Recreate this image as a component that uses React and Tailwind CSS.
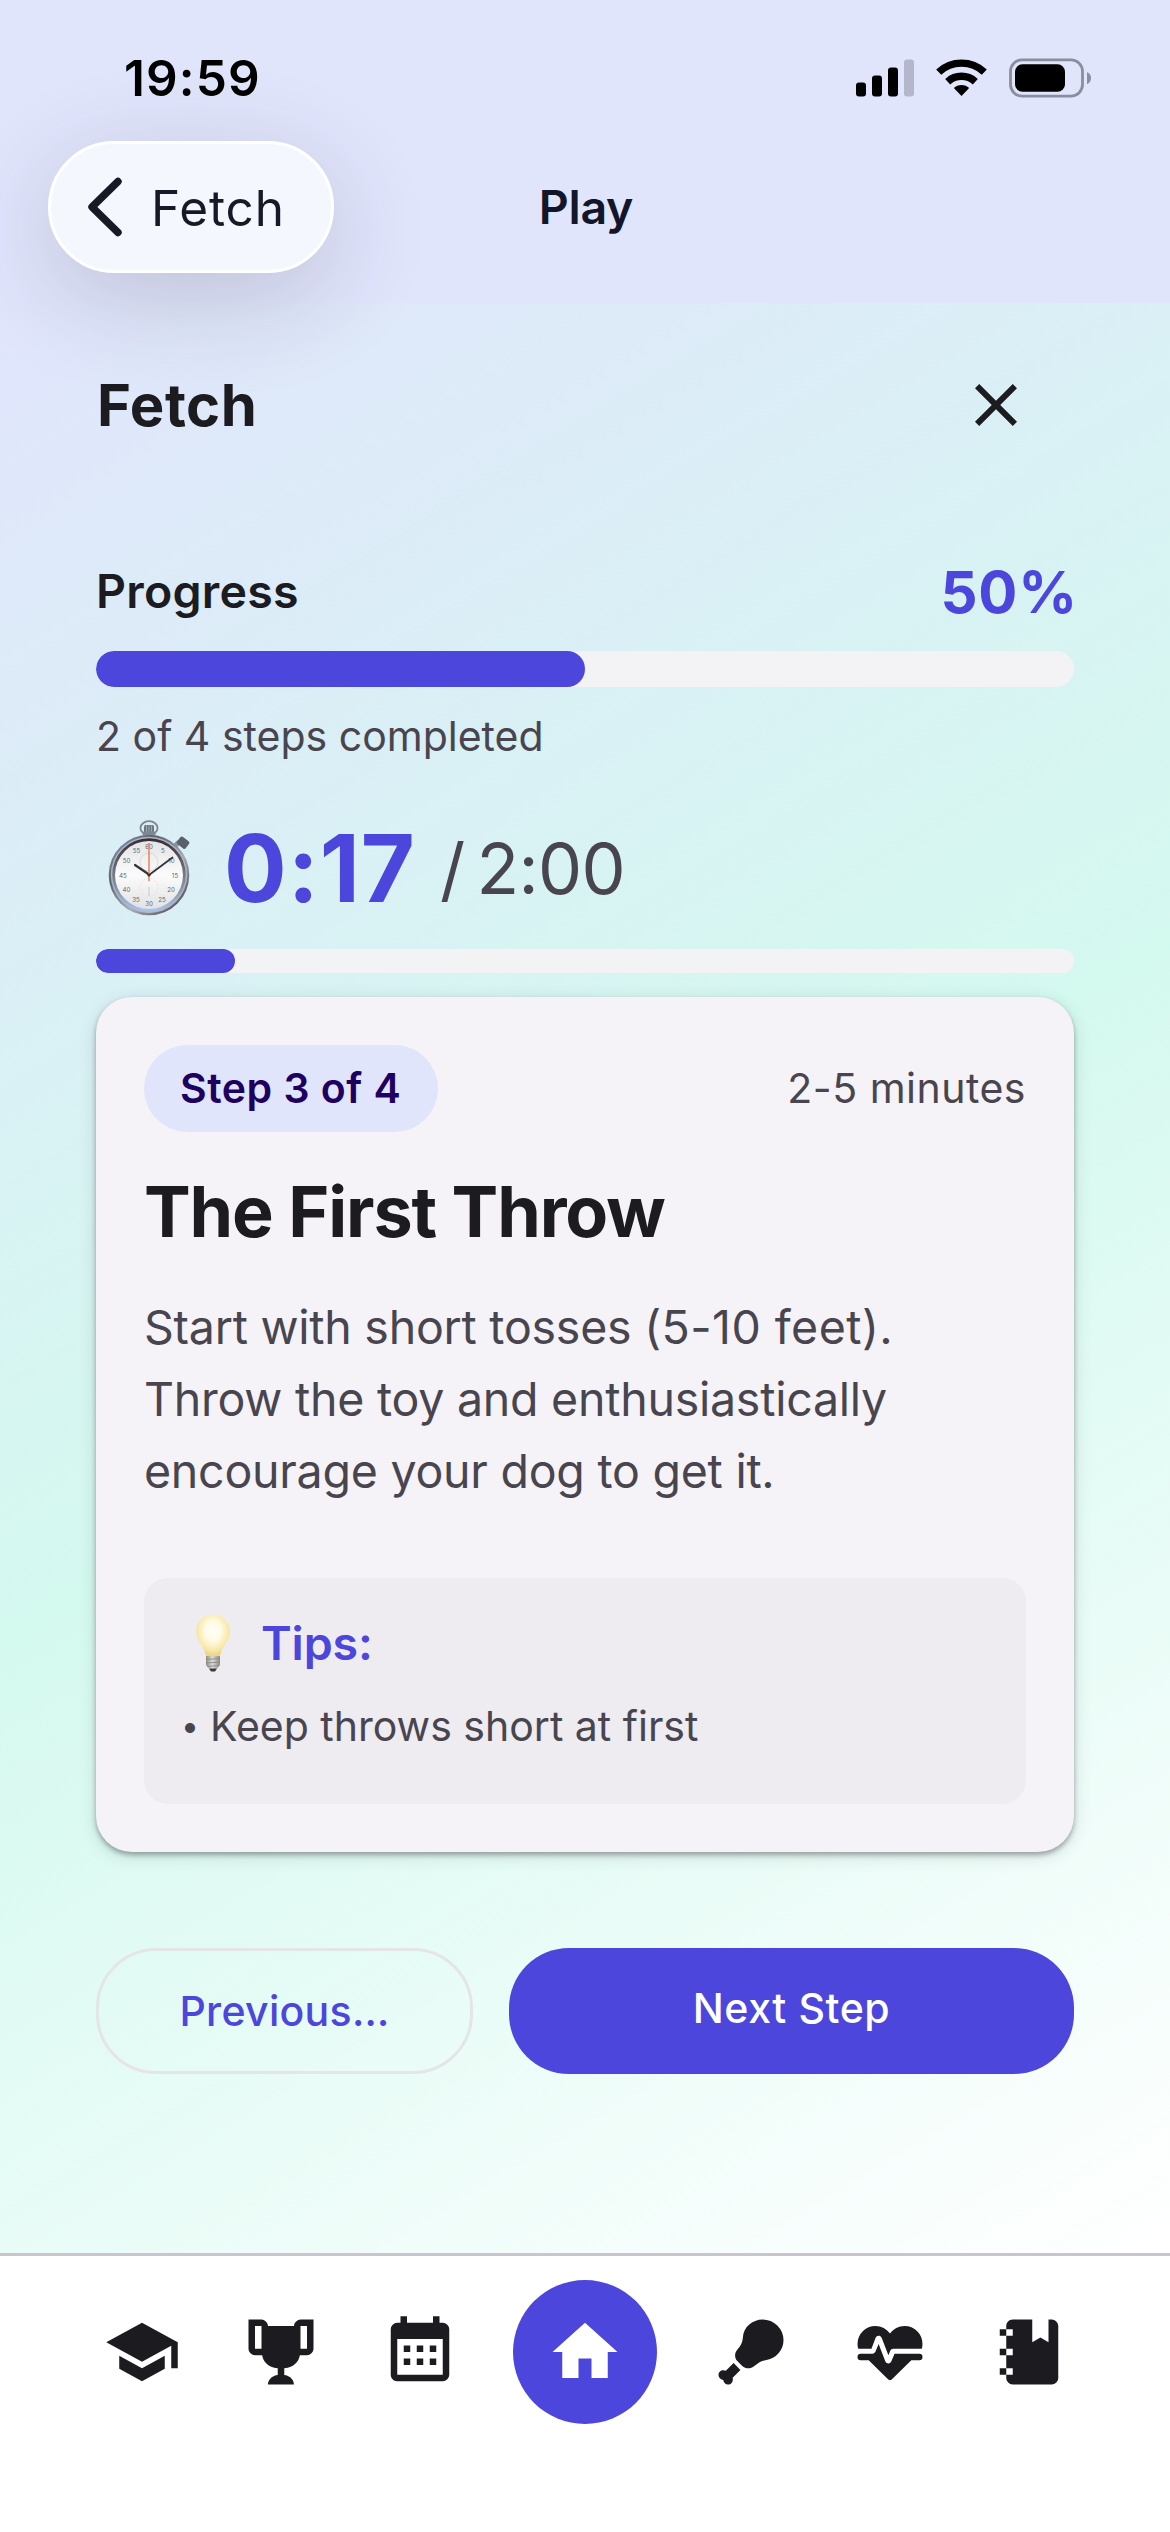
import clsx from 'clsx';

const steps = { current: 3, total: 4, completed: 2 };
const timer = { elapsed: 17, total: 120 };

const tabs = [
  { name: 'Training', path: 'M12,3L1,9L12,15L21,10.09V17H23V9M5,13.18V17.18L12,21L19,17.18V13.18L12,17L5,13.18Z' },
  { name: 'Achievements', path: 'M18 2C17.1 2 16 3 16 4H8C8 3 6.9 2 6 2H2V11C2 12 3 13 4 13H6.2C6.6 15 7.9 16.7 11 17V19.08C8 19.54 8 22 8 22H16C16 22 16 19.54 13 19.08V17C16.1 16.7 17.4 15 17.8 13H20C21 13 22 12 22 11V2H18M6 11H4V4H6V11M20 11H18V4H20V11Z' },
  { name: 'Calendar', path: 'M9,10V12H7V10H9M13,10V12H11V10H13M17,10V12H15V10H17M19,3A2,2 0 0,1 21,5V19A2,2 0 0,1 19,21H5C3.89,21 3,20.1 3,19V5A2,2 0 0,1 5,3H6V1H8V3H16V1H18V3H19M19,19V8H5V19H19M9,14V16H7V14H9M13,14V16H11V14H13M17,14V16H15V14H17Z' },
  { name: 'Home', active: true, path: 'M10,20V14H14V20H19V12H22L12,3L2,12H5V20H10Z' },
  { name: 'Food', path: 'M15.6,2A6.4,6.4 0 0,1 22,8.3A6.2,6.2 0 0,1 16.8,14.45C15.6,14.65 14.8,15 14.1,15.55L12.6,16.6C11.6,17.3 10.2,17.1 9.3,16.3L7.8,14.8C6.9,13.8 6.9,12.4 7.7,11.4L8.5,10.4C9.1,9.5 9.4,8.7 9.5,7.6C9.6,4.4 12.4,2 15.6,2M6.65,15.4L8.75,17.5L6.35,19.95C6.6,21 6,22 4.95,22C4.1,22 3.6,21.4 3.45,20.6C2.6,20.5 2,19.9 2,19.1C2,18 3.1,17.3 4.25,17.8L6.65,15.4Z' },
  { name: 'Health', path: 'M7.5,4A5.5,5.5 0 0,0 2,9.5C2,10 2.09,10.5 2.22,11H6.3L7.57,7.63C7.87,6.83 9.05,6.75 9.43,7.63L11.5,13L12.09,11.58C12.22,11.25 12.57,11 13,11H21.78C21.91,10.5 22,10 22,9.5A5.5,5.5 0 0,0 16.5,4C14.64,4 13,4.93 12,6.34C11,4.93 9.36,4 7.5,4V4M3,12.5A1,1 0 0,0 2,13.5A1,1 0 0,0 3,14.5H5.44L11,20C12,20.9 12,20.9 13,20L18.56,14.5H21A1,1 0 0,0 22,13.5A1,1 0 0,0 21,12.5H13.4L12.47,14.8C12.07,15.81 10.92,15.67 10.55,14.83L8.5,9.5L7.54,11.83C7.39,12.21 7.05,12.5 6.6,12.5H3Z' },
  { name: 'Journal', path: 'M3,7V5H5V4C5,2.89 5.9,2 7,2H13V9L15.5,7.5L18,9V2H19C20.05,2 21,2.95 21,4V20C21,21.05 20.05,22 19,22H7C5.95,22 5,21.05 5,20V19H3V17H5V13H3V11H5V7H3M7,11H5V13H7V11M7,7V5H5V7H7M7,19V17H5V19H7Z' },
];

const dialNumbers = [
  ['60', 41, 29], ['5', 55, 33], ['10', 63.5, 43], ['15', 67, 57.5], ['20', 63, 71.5], ['25', 54, 82],
  ['30', 41, 86], ['35', 28, 82], ['40', 18.5, 71.5], ['45', 15, 57.5], ['50', 18.5, 43], ['55', 28.5, 33],
];

function formatTime(seconds) {
  return `${Math.floor(seconds / 60)}:${String(seconds % 60).padStart(2, '0')}`;
}

function StatusIcons() {
  return (
    <svg className="w-[236px] h-10" viewBox="0 0 236 40" fill="none">
      <rect x="0" y="24.5" width="10" height="14" rx="3" fill="#000" />
      <rect x="16" y="17.5" width="10" height="21" rx="3" fill="#000" />
      <rect x="32" y="9.5" width="10" height="29" rx="3" fill="#000" />
      <rect x="48" y="1.5" width="10" height="37" rx="3" fill="#b4b7cb" />
      <path d="M82.7 14.1A33.4 33.4 0 0 1 128.3 14.1" stroke="#000" strokeWidth="7.4" />
      <path d="M91.7 23.7A20.3 20.3 0 0 1 119.3 23.7" stroke="#000" strokeWidth="7.4" />
      <path d="M105.5 38L98.3 30.6Q97.7 29.8 98.6 29.2A11.8 11.8 0 0 1 112.4 29.2Q113.3 29.8 112.7 30.6Z" fill="#000" />
      <rect x="154.5" y="1.9" width="72" height="36.2" rx="11.5" stroke="#8b8e9c" strokeWidth="2.8" />
      <rect x="159" y="6.3" width="50" height="27.4" rx="7.5" fill="#000" />
      <path d="M231 14C234 15.5 235 17.8 235 20C235 22.2 234 24.8 231 26.2Z" fill="#8b8e9c" />
    </svg>
  );
}

function Stopwatch() {
  return (
    <svg className="w-[84px] h-24 ml-3" viewBox="0 0 84 96">
      <defs>
        <linearGradient id="rim" x1="0" y1="0" x2="1" y2="1">
          <stop offset="0" stopColor="#8fa9cf" />
          <stop offset="0.3" stopColor="#5d6169" />
          <stop offset="0.6" stopColor="#a9acb3" />
          <stop offset="1" stopColor="#3c2c2f" />
        </linearGradient>
        <linearGradient id="rimInner" x1="0" y1="0" x2="0" y2="1">
          <stop offset="0" stopColor="#3a2a2e" />
          <stop offset="0.5" stopColor="#777a82" />
          <stop offset="1" stopColor="#a9c4ee" />
        </linearGradient>
        <linearGradient id="dial" x1="0" y1="0" x2="0" y2="1">
          <stop offset="0" stopColor="#e4e4e6" />
          <stop offset="0.5" stopColor="#fbfbfb" />
          <stop offset="1" stopColor="#e2e2e4" />
        </linearGradient>
      </defs>
      <ellipse cx="41" cy="8" rx="8.6" ry="6.8" fill="none" stroke="#7c8691" strokeWidth="1.8" />
      <rect x="36" y="5" width="10" height="8" rx="1.5" fill="#6d7681" />
      <path d="M38.5 5.5V12M41 5.5V12M43.5 5.5V12" stroke="#aeb7c0" strokeWidth="0.8" />
      <rect x="34.5" y="11.5" width="13" height="4" rx="1.5" fill="#7f8992" />
      <path d="M66 27L71 22" stroke="#8a939c" strokeWidth="5" />
      <rect x="70" y="18" width="11" height="9" rx="2" fill="#59626c" transform="rotate(38 75 22)" />
      <circle cx="41" cy="55" r="40.3" fill="url(#rim)" />
      <circle cx="41" cy="55" r="38.2" fill="#a9b7cd" />
      <circle cx="41" cy="55" r="36.8" fill="url(#rimInner)" />
      <circle cx="41" cy="55" r="34" fill="url(#dial)" />
      <circle cx="41" cy="42" r="9" fill="none" stroke="#d0d0d3" strokeWidth="0.7" />
      <circle cx="41" cy="67.5" r="9" fill="none" stroke="#dcdcdf" strokeWidth="0.7" strokeDasharray="2 2" />
      <path d="M41 67V76" stroke="#c4c4c7" strokeWidth="0.9" />
      {dialNumbers.map(([label, x, y]) => (
        <text key={label} x={x} y={y} textAnchor="middle" fontSize="6.2" fill="#66666a" className="font-['Inter',sans-serif]">
          {label}
        </text>
      ))}
      <path d="M27 45L41 54.5" stroke="#30343a" strokeWidth="2.2" strokeLinecap="round" />
      <path d="M41 55L64.5 37.5" stroke="#30343a" strokeWidth="1.7" strokeLinecap="round" />
      <path d="M41 23V61" stroke="#ee7f5c" strokeWidth="1.5" />
      <circle cx="41" cy="55" r="1.6" fill="#3a2f30" />
    </svg>
  );
}

function LightBulb() {
  return (
    <svg className="w-[34px] h-[58px]" viewBox="0 0 34 58">
      <defs>
        <radialGradient id="glow" cx="0.5" cy="0.4" r="0.58">
          <stop offset="0" stopColor="#fffefa" />
          <stop offset="0.4" stopColor="#fffbe6" />
          <stop offset="0.8" stopColor="#f8e8a8" />
          <stop offset="1" stopColor="#eed584" />
        </radialGradient>
        <linearGradient id="screw" x1="0" y1="0" x2="1" y2="0">
          <stop offset="0" stopColor="#8f8c86" />
          <stop offset="0.45" stopColor="#dedcd8" />
          <stop offset="1" stopColor="#8b8984" />
        </linearGradient>
      </defs>
      <path d="M17 0.5C7.5 0.5 0.3 8 0.3 17.5C0.3 27 8 32 9.2 39.5Q9.5 42 11.5 42H22.5Q24.5 42 24.8 39.5C26 32 33.7 27 33.7 17.5C33.7 8 26.5 0.5 17 0.5Z" fill="url(#glow)" />
      <path d="M10 42H24V51L21 54.5H13L10 51Z" fill="url(#screw)" />
      <path d="M10 45.5L24 44.5M10 49L24 48M11 52.5L23 51.5" stroke="#8c8a86" strokeWidth="0.9" />
      <path d="M13 54.5H21L19 57.5H15Z" fill="#3b3a3a" />
    </svg>
  );
}

function ProgressBar({ value, className }) {
  return (
    <div className={clsx('w-full rounded-full bg-[#f3f3f6] overflow-hidden', className)}>
      <div className="h-full rounded-full bg-[#4c46dc]" style={{ width: `${value * 100}%` }}></div>
    </div>
  );
}

function Header() {
  return (
    <header className="relative z-10 h-[303px] shrink-0 bg-[#e1e5fc]">
      <div className="flex items-center justify-between h-[141px] pt-12 pb-[33px] pl-[124px] pr-[78px]">
        <span className="text-[49.5px] leading-[60px] font-semibold tracking-[1.1px] text-black">19:59</span>
        <StatusIcons />
      </div>
      <div className="grid grid-cols-[1fr_auto_1fr] items-center px-12">
        <button className="flex items-center w-[286px] h-[132px] pl-[36px] rounded-full border-[3px] border-white bg-[#f4f7fe] shadow-[0_24px_100px_rgba(40,40,60,0.19)]">
          <svg className="w-[36px] h-[60px]" viewBox="0 0 36 60" fill="none">
            <path d="M31 4.5L5 30L31 55.5" stroke="#171a26" strokeWidth="7.4" strokeLinecap="round" strokeLinejoin="round" />
          </svg>
          <span className="ml-[28px] pt-0.5 text-[49.5px] leading-[60px] tracking-[0.9px] text-[#171a26]">Fetch</span>
        </button>
        <h1 className="pl-0.5 text-[46.5px] leading-[60px] font-semibold tracking-[-0.3px] text-[#12162a]">Play</h1>
      </div>
    </header>
  );
}

function StepCard() {
  return (
    <section className="mt-6 h-[855px] rounded-[36px] bg-[#f5f3f8] p-12 shadow-[0_3px_5px_rgba(0,0,0,0.3),0_4px_18px_rgba(0,0,0,0.13)]">
      <div className="flex items-center justify-between">
        <span className="flex items-center h-[87px] w-[294px] pl-9 rounded-full bg-[#e1e5fc] text-[41px] font-semibold tracking-[0.5px] text-[#1e0060]">
          Step {steps.current} of {steps.total}
        </span>
        <span className="text-[41px] tracking-[0.5px] text-[#49454f]">2-5 minutes</span>
      </div>
      <h3 className="mt-[38px] text-[70px] leading-[84px] font-bold tracking-[-1.1px] text-[#1c1b1f]">The First Throw</h3>
      <p className="mt-[37px] text-[46.5px] leading-[72px] tracking-[-0.24px] text-[#49454f]">
        Start with short tosses <span className="tracking-[0.45px]">(5-10 feet).</span> Throw the toy and enthusiastically encourage your dog to get it.
      </p>
      <div className="mt-[71px] h-[226px] rounded-3xl bg-[#eeebf1] pt-[29px] px-9">
        <div className="flex items-center pl-4">
          <LightBulb />
          <h4 className="ml-[31px] text-[46.5px] leading-[72px] font-semibold tracking-[-0.1px] text-[#4c46dc]">Tips:</h4>
        </div>
        <div className="flex mt-[17px] leading-[60px] text-[#49454f]">
          <span className="w-[30px] pl-px text-[32px]">•</span>
          <span className="text-[41px]">Keep throws short at first</span>
        </div>
      </div>
    </section>
  );
}

function TabBar() {
  return (
    <nav className="flex h-[279px] shrink-0 border-t-[3px] border-[#cac4d0] bg-white px-[72px] pt-6">
      {tabs.map(tab => (
        <button
          key={tab.name}
          aria-label={tab.name}
          className={clsx('flex items-center justify-center h-36', tab.active ? 'w-48' : 'w-[139px]')}
        >
          <span className={clsx('flex items-center justify-center', tab.active && 'w-36 h-36 rounded-full bg-[#4c46dc]')}>
            <svg className={clsx('w-[78px] h-[78px]', tab.active ? 'fill-white' : 'fill-[#1c1b1f]')} viewBox="0 0 24 24">
              <path d={tab.path} />
            </svg>
          </span>
        </button>
      ))}
    </nav>
  );
}

export default function App() {
  return (
    <div className="flex flex-col w-[1170px] h-[2532px] overflow-hidden bg-white font-['Inter',sans-serif]">
      <Header />

      <main className="grow px-24 pt-[66px] bg-[linear-gradient(149.04deg,#e1e5fc_0%,#d4f9ef_50%,#ffffff_100%)]">
        <div className="flex items-center justify-between pr-[42px]">
          <h2 className="pl-px text-[58px] leading-[72px] font-bold tracking-[0.5px] text-[#1c1b1f]">Fetch</h2>
          <button aria-label="Close">
            <svg className="block w-[72px] h-[72px] fill-[#1c1b1f]" viewBox="0 0 24 24">
              <path d="M19,6.41L17.59,5L12,10.59L6.41,5L5,6.41L10.59,12L5,17.59L6.41,19L12,13.41L17.59,19L19,17.59L13.41,12L19,6.41Z" />
            </svg>
          </button>
        </div>

        {/* Overall progress */}
        <div className="flex items-center justify-between mt-[115px]">
          <span className="text-[46.5px] font-semibold tracking-[0.25px] text-[#1c1b1f]">Progress</span>
          <span className="-mr-1 text-[58px] leading-[72px] font-bold tracking-[0.8px] text-[#4c46dc]">
            {(steps.completed / steps.total) * 100}%
          </span>
        </div>
        <ProgressBar value={steps.completed / steps.total} className="mt-[23px] h-9" />
        <p className="mt-[19px] text-[41px] leading-[60px] text-[#49454f]">
          {steps.completed} of {steps.total} steps completed
        </p>

        {/* Step timer */}
        <div className="flex items-center mt-[42px]">
          <Stopwatch />
          <span className="ml-8 text-[93px] leading-[120px] font-bold tracking-[1px] text-[#4c46dc]">{formatTime(timer.elapsed)}</span>
          <span className="ml-6 text-[70px] tracking-[-0.7px] [word-spacing:-7px] text-[#49454f]">/ {formatTime(timer.total)}</span>
        </div>
        <ProgressBar value={timer.elapsed / timer.total} className="mt-[21px] h-6" />

        <StepCard />

        <div className="flex gap-9 mt-24">
          <button className="w-[377px] h-[126px] pt-0.5 rounded-[60px] border-[3px] border-[#e5e5e8] text-[41px] font-medium tracking-[0.3px] text-[#4c46dc]">
            Previous…
          </button>
          <button className="grow h-[126px] pb-1 rounded-[60px] bg-[#4c46dc] text-[41px] font-medium tracking-[0.6px] text-white">
            Next Step
          </button>
        </div>
      </main>

      <TabBar />
    </div>
  );
}
